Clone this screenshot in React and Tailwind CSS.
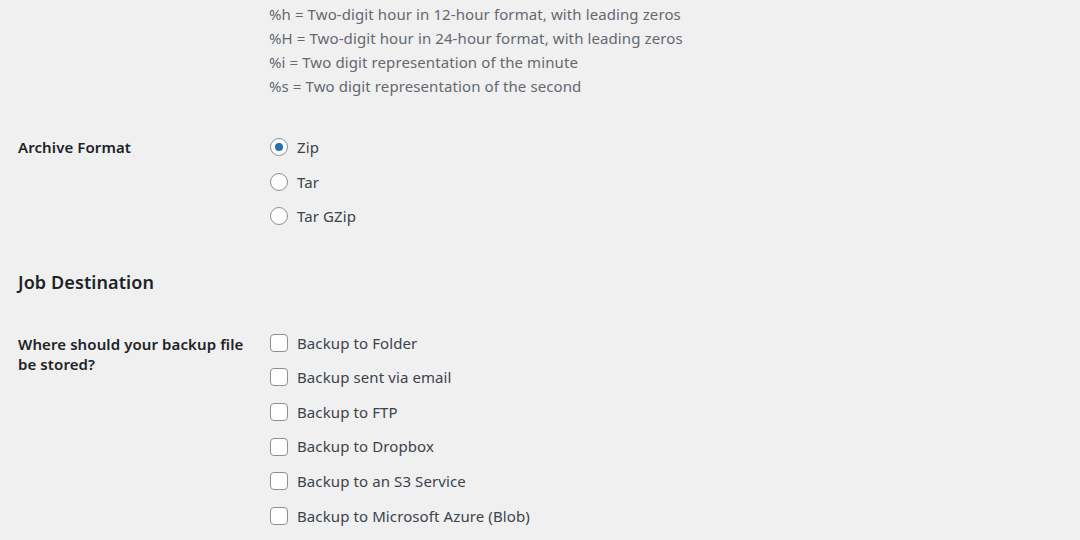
const descriptions = [
  '%h = Two-digit hour in 12-hour format, with leading zeros',
  '%H = Two-digit hour in 24-hour format, with leading zeros',
  '%i = Two digit representation of the minute',
  '%s = Two digit representation of the second',
]

const formats = ['Zip', 'Tar', 'Tar GZip']

const destinations = [
  'Backup to Folder',
  'Backup sent via email',
  'Backup to FTP',
  'Backup to Dropbox',
  'Backup to an S3 Service',
  'Backup to Microsoft Azure (Blob)',
]

function Radio({ checked }) {
  return (
    <span className="w-[18px] h-[18px] rounded-full border border-[#8c8f94] bg-white flex items-center justify-center shrink-0">
      {checked && <span className="w-[8px] h-[8px] rounded-full bg-[#2271b1]" />}
    </span>
  )
}

function Checkbox() {
  return <span className="w-[18px] h-[18px] rounded-[4px] border border-[#8c8f94] bg-white shrink-0" />
}

export default function App() {
  return (
    <div className="min-h-screen w-[1080px] h-[540px] overflow-hidden bg-[#f0f0f1] font-['Noto_Sans',sans-serif] text-[15px] tracking-[0.1px] text-[#3c434a]">
      {/* Date format help */}
      <div className="flex pt-[2px]">
        <div className="w-[269px] shrink-0" />
        <div className="text-[#646970] leading-[24px]">
          {descriptions.map((d) => (
            <div key={d}>{d}</div>
          ))}
        </div>
      </div>

      {/* Archive format */}
      <div className="flex mt-[32px]">
        <div className="w-[269px] shrink-0 pl-[18px] h-[35px] flex items-center font-semibold text-[#1d2327]">
          Archive Format
        </div>
        <div className="flex flex-col">
          {formats.map((f, i) => (
            <label key={f} className="h-[34.5px] flex items-center gap-[9px] pl-[1px]">
              <Radio checked={i === 0} />
              <span>{f}</span>
            </label>
          ))}
        </div>
      </div>

      {/* Job destination */}
      <h2 className="pl-[18px] mt-[34px] h-[30px] flex items-center text-[18px] font-semibold text-[#1d2327]">
        Job Destination
      </h2>

      <div className="flex mt-[28px]">
        <div className="w-[269px] shrink-0 pl-[18px] pt-[8px] pr-[20px] leading-[20px] font-semibold text-[#1d2327]">
          Where should your backup file
          <br />
          be stored?
        </div>
        <div className="flex flex-col">
          {destinations.map((d) => (
            <label key={d} className="h-[34.6px] flex items-center gap-[9px] pl-[1px]">
              <Checkbox />
              <span>{d}</span>
            </label>
          ))}
        </div>
      </div>
    </div>
  )
}
